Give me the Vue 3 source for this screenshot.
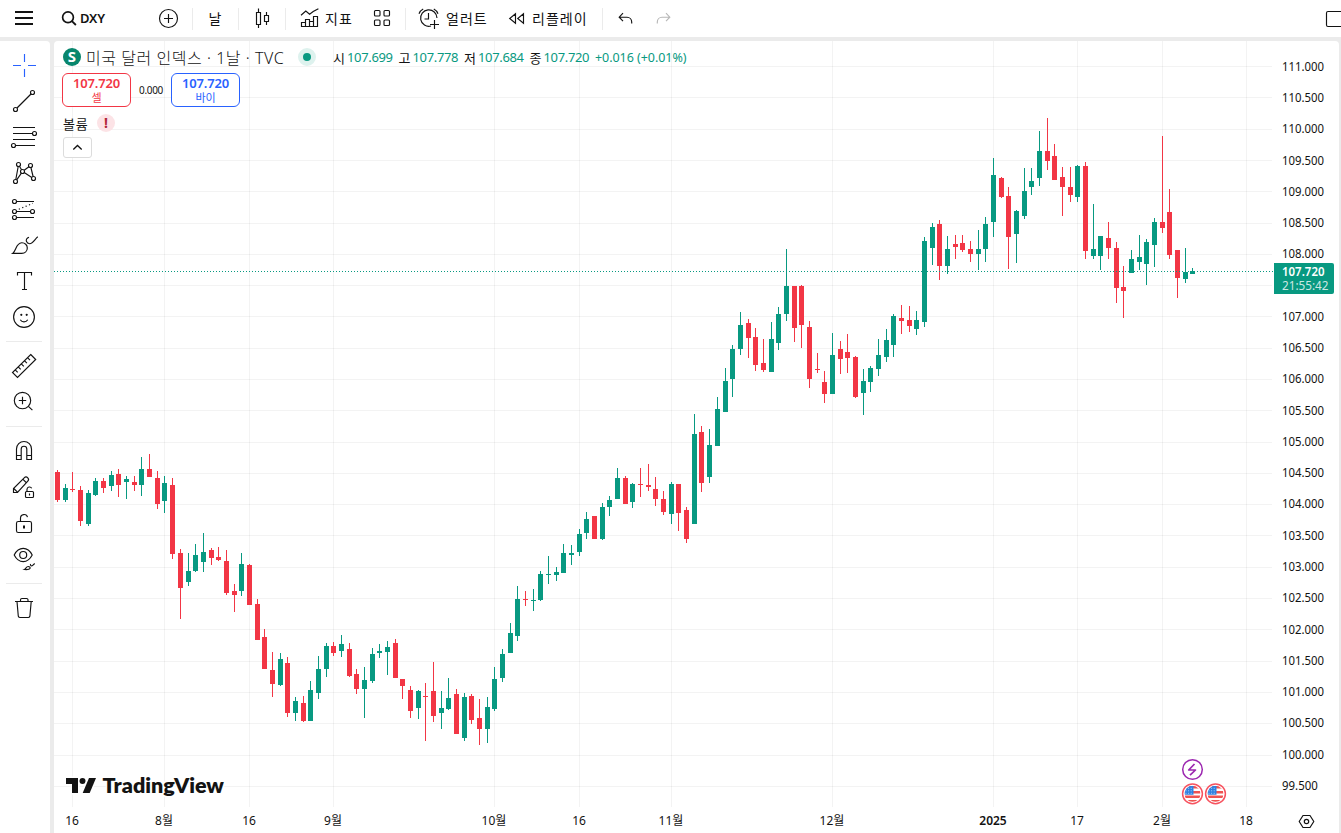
<script setup>
const UP = '#089981'
const DOWN = '#f23645'

// Each row: x, wick top, wick bottom, body top, body bottom, rising (1) or falling (0)
const candles = [
  [57,470,502,472,500,0],[65,484,502,488,500,1],[72,472,492,489,490,0],[80,486,526,490,521,0],
  [88,490,526,493,524,1],[95,478,496,481,495,1],[103,478,493,481,488,0],[111,471,491,475,486,1],
  [118,469,497,474,485,0],[126,476,499,479,482,1],[134,476,491,482,485,0],[141,457,496,469,485,1],
  [149,454,477,469,477,0],[157,471,509,478,504,0],[164,476,513,483,501,1],[172,478,559,485,554,0],
  [180,549,619,553,588,0],[188,553,586,571,582,1],[195,544,572,555,571,1],[203,533,572,552,562,1],
  [211,548,565,550,558,0],[218,547,561,557,560,0],[226,550,595,561,593,0],[234,584,612,591,595,0],
  [241,553,596,564,591,1],[249,564,605,565,605,0],[257,599,640,604,640,0],[264,629,669,637,669,0],
  [272,652,697,670,684,0],[280,653,686,659,685,1],[287,657,717,663,713,0],[295,697,721,701,713,1],
  [303,696,722,703,721,0],[310,681,721,690,721,1],[318,656,699,669,693,1],[326,643,677,646,669,1],
  [333,642,656,646,653,0],[341,635,657,644,651,1],[349,643,677,649,676,0],[356,669,694,674,689,0],
  [364,667,718,680,689,1],[372,648,683,654,681,1],[379,644,658,651,653,1],[387,641,675,647,652,1],
  [395,639,678,643,678,0],[402,679,699,679,686,0],[410,686,718,690,711,0],[418,690,719,691,708,1],
  [425,683,741,696,697,0],[433,662,722,691,716,0],[441,691,729,708,713,1],[448,678,710,698,709,1],
  [456,689,734,694,734,0],[464,693,741,697,738,1],[471,694,724,696,720,0],[479,699,745,718,729,0],
  [487,697,743,707,729,1],[494,667,711,679,709,1],[502,649,682,654,678,1],[510,623,653,633,653,1],
  [517,586,641,599,636,1],[525,591,606,599,600,0],[533,589,611,600,601,1],[540,571,601,574,600,1],
  [548,556,584,574,575,1],[556,567,581,572,575,1],[563,544,573,553,573,1],[571,545,565,553,555,1],
  [579,529,556,534,552,1],[586,512,539,519,533,1],[594,516,539,516,539,0],[602,503,540,507,539,1],
  [609,496,516,500,507,1],[617,468,499,478,499,1],[625,476,504,478,504,0],[632,483,508,484,502,1],
  [640,468,497,484,485,0],[648,464,491,485,487,0],[655,477,506,489,499,0],[663,491,515,499,512,0],
  [671,482,524,484,514,1],[678,484,531,484,513,0],[686,507,543,510,539,0],[694,414,524,434,524,1],
  [701,426,492,432,483,0],[709,429,483,445,477,1],[717,397,446,409,446,1],[725,368,412,381,412,1],
  [732,345,397,349,379,1],[740,312,355,325,349,1],[748,319,358,323,338,0],[755,328,371,337,365,0],
  [763,339,372,363,370,0],[771,322,372,339,372,1],[778,307,350,314,343,1],[786,249,321,286,314,1],
  [794,286,342,286,328,0],[801,285,348,286,325,0],[809,321,388,327,379,0],[817,353,373,369,370,0],
  [824,371,403,382,394,0],[832,333,394,355,394,1],[840,341,374,349,359,0],[847,334,373,352,358,0],
  [855,356,398,357,397,0],[863,369,415,381,393,1],[870,366,392,368,382,1],[878,339,376,355,369,1],
  [886,329,362,340,357,1],[893,314,357,316,345,1],[901,305,334,318,321,0],[909,306,332,320,326,0],
  [916,311,335,320,329,1],[924,237,327,241,322,1],[932,223,265,227,248,1],[939,220,280,224,266,0],
  [947,236,274,249,266,1],[955,235,259,244,247,0],[962,235,252,243,250,0],[970,241,262,249,254,0],
  [978,230,270,249,254,1],[985,217,262,224,249,1],[993,158,237,175,222,1],[1001,177,198,178,197,0],
  [1008,187,269,196,237,0],[1016,210,263,211,234,1],[1024,168,219,191,216,1],[1031,168,195,181,187,1],
  [1039,131,186,151,178,1],[1047,118,170,151,161,0],[1054,144,180,156,180,0],[1062,167,216,177,187,0],
  [1070,167,202,187,195,0],[1077,165,202,166,197,1],[1085,162,259,166,251,0],[1093,204,259,249,256,1],
  [1100,236,270,236,256,1],[1108,222,259,238,248,0],[1116,242,303,248,288,0],[1123,266,318,287,291,0],
  [1131,250,273,259,273,1],[1139,235,270,257,262,1],[1146,239,285,242,264,1],[1154,218,267,222,245,1],
  [1162,136,233,222,228,0],[1169,189,259,212,255,0],[1177,250,298,250,278,0],[1185,248,283,272,279,1],
  [1192,268,274,271,274,1],
]

const rows = [66,97,129,160,191,223,254,285,316,348,379,410,442,473,504,535,567,598,629,661,692,723,755,786]
const prices = rows
  .map((y, i) => ({ y: Math.floor(66.2 + i * 31.27), text: (111 - i * 0.5).toFixed(3) }))
  .filter((p) => p.text !== '107.500')

const dates = [
  [72, '16'], [164, '8월'], [249, '16'], [333, '9월'], [494, '10월'], [579, '16'],
  [671, '11월'], [832, '12월'], [993, '2025'], [1077, '17'], [1162, '2월'], [1246, '18'],
]

const ohlc = [['시', '107.699'], ['고', '107.778'], ['저', '107.684'], ['종', '107.720']]
</script>

<template>
  <div class="app">
    <header class="topbar">
      <svg class="ic" width="48" height="37" viewBox="0 0 48 37"><path d="M15 12h18M15 18h18M15 24h18" stroke-width="2" /></svg>
      <div class="cell search">
        <svg class="ic" width="32" height="37" viewBox="48 0 32 37"><circle cx="68" cy="17.3" r="5.4" stroke-width="1.7" /><path d="M71.9 21.2l4 3.8" stroke-width="1.8" /></svg>
        <b>DXY</b>
      </div>
      <svg class="ic" width="48" height="37" viewBox="144 0 48 37"><circle cx="168.5" cy="18.5" r="9" /><path d="M164 18.5h9M168.5 14v9" /></svg>
      <i class="sep"></i>
      <div class="cell day"><span>날</span></div>
      <i class="sep"></i>
      <svg class="ic" width="46" height="37" viewBox="239 0 46 37"><path d="M256.5 12.5h4v12h-4zM258.5 8.5v4M258.5 24.5v3.5M264.5 15.5h4v6h-4zM266.5 12v3.5M266.5 21.5v3.5" /></svg>
      <i class="sep"></i>
      <div class="cell indicators">
        <svg class="ic" width="39" height="37" viewBox="286 0 39 37"><path d="M301.5 26.5v-4h4v4zM305.5 26.5v-7h4v7zM309.5 26.5v-5h4v5zM313.500 26.5v-10h4v10z" /><path d="M301 15.200l4.800-4.200 3.800 3.200 3.600-2.700 5.200-2.700" /></svg>
        <span>지표</span>
      </div>
      <svg class="ic" width="41" height="37" viewBox="364 0 41 37"><rect x="374.5" y="10.500" width="5.500" height="5.500" rx="1" /><rect x="384" y="10.500" width="5.500" height="5.500" rx="1" /><rect x="374.500" y="20" width="5.500" height="5.500" rx="1" /><rect x="384" y="20" width="5.500" height="5.500" rx="1" /></svg>
      <i class="sep"></i>
      <div class="cell alerts">
        <svg class="ic" width="40" height="37" viewBox="406 0 40 37"><path d="M431 26a8.200 8.200 0 1 1 6-8M428.500 13v6h-4M419 13.800a9 9 0 0 1 4.200-4.700M438 13.800a9 9 0 0 0-4.200-4.700M434.500 20v9M430 24.500h9" /></svg>
        <span>얼러트</span>
      </div>
      <div class="cell replay">
        <svg class="ic" width="33" height="37" viewBox="499 0 33 37"><path d="M515.500 13.800v9.400l-5.800-4.700zM523.500 13.800v9.400l-5.800-4.700z" /></svg>
        <span>리플레이</span>
      </div>
      <i class="sep"></i>
      <svg class="ic" width="42" height="37" viewBox="603 0 42 37"><path d="M623 13.200l-3.800 4 3.800 4M619.500 17.200h7.500a4.800 4.800 0 0 1 4.700 4.800v1.500" /></svg>
      <svg class="ic off" width="45" height="37" viewBox="645 0 45 37"><path d="M666 13.200l3.800 4-3.800 4M669.500 17.200h-7.500a4.800 4.800 0 0 0-4.700 4.800v1.500" /></svg>
      <svg class="ic window" width="20" height="37" viewBox="1321 0 20 37"><rect x="1326.500" y="11.500" width="22" height="15" rx="1.500" /></svg>
    </header>

    <div class="body">
      <nav class="tools">
        <svg class="ic cross" viewBox="0 0 36 36"><path d="M18.500 7v8M18.500 22v8M7 18.500h8M22 18.500h8" /></svg>
        <svg class="ic" viewBox="0 0 36 36"><circle cx="9.500" cy="26.500" r="2" /><circle cx="26.500" cy="9.500" r="2" /><path d="M11 25L25 11" /></svg>
        <svg class="ic" viewBox="0 0 36 36"><path d="M7 8.500h22M7 14.500h19.500M7 20.500h22M9.500 26.500H29" /><circle cx="28.500" cy="14.500" r="2" /><circle cx="7.500" cy="26.500" r="2" /></svg>
        <svg class="ic" viewBox="0 0 36 36"><path d="M9.800 24.500l2.400-13M13.400 11.300l2.200 3.500M18.200 15.300l4.700-3.500M24.900 12.500l2.200 9M10.700 24.800l4.700-6.600M18.200 17.600l7.600 4.800" /><circle cx="12.500" cy="9.500" r="2" /><circle cx="24.500" cy="10.500" r="2" /><circle cx="16.500" cy="16.500" r="2" /><circle cx="9.500" cy="26.500" r="2" /><circle cx="27.500" cy="23.500" r="2" /></svg>
        <svg class="ic" viewBox="0 0 36 36"><circle cx="8.500" cy="10.500" r="2" /><circle cx="8.500" cy="20.500" r="2" /><circle cx="8.500" cy="26.500" r="2" /><circle cx="26.500" cy="20.500" r="2" /><path d="M10.500 10.500H28M10.500 20.500h14M10.500 26.500H28" /><path d="M12.800 18.300l14-6" stroke-dasharray="1.200 2.500" /></svg>
        <svg class="ic" viewBox="0 0 36 36"><path d="M6.700 26.400c3.600-2.400 3-10.300 9-10.600 3.300-.1 5.600 2.300 5.600 5.200 0 3.300-2.500 5.400-5.500 5.400zM23 10.200c-2.300.8-3.200 2.600-2.500 4.200M31.800 9.800c-2.800 2-4.800 7-8.200 6.900-1.500-.1-2.700-1-3.100-2.300" /></svg>
        <svg class="ic" viewBox="0 0 36 36"><path d="M11.500 12.500v-3h14v3M18.500 9.500v17M16 26.500h5" /></svg>
        <svg class="ic" viewBox="0 0 36 36"><circle cx="18" cy="18" r="10.400" /><path d="M14.300 20.700c1.700 2.900 5.700 2.900 7.400 0" /><circle class="dot" cx="15.300" cy="15.800" r="1.100" /><circle class="dot" cx="20.700" cy="15.800" r="1.100" /></svg>
        <hr />
        <svg class="ic" viewBox="0 0 36 36"><path d="M24.700 6.500l5 5-18.200 18-5-5zM21.500 9.700l2.500 2.500M18.400 12.700l2.500 2.500M15.300 15.800l2.500 2.500M12.200 18.900l2.500 2.500M9.200 21.900l2.500 2.500" /></svg>
        <svg class="ic" viewBox="0 0 36 36"><circle cx="16.500" cy="16.500" r="8.200" /><path d="M22.400 22.400l4 3.800M12.800 16.500h7.400M16.500 12.800v7.400" /></svg>
        <hr />
        <svg class="ic" viewBox="0 0 36 36"><path d="M10.500 26.500V16a7.500 7.500 0 0 1 15 0v10.500h-4.700V16a2.800 2.800 0 0 0-5.600 0v10.500zM10.500 22.500h4.700M20.800 22.500h4.700" /></svg>
        <svg class="ic" viewBox="0 0 36 36"><path d="M7.500 23.500v-4L18.200 8.800c1.200-1.200 2.800-.8 3.600 0s1 2.200 0 3.300L11.500 23.500zM7.800 19.500l3.700 3.700M16.800 10.200l3.800 3.800" /><rect x="19.500" y="22.500" width="8" height="6" rx="1" /><path d="M21 22.500v-2.200a2.500 2.500 0 0 1 4.700-1M23.500 24.500v2" /></svg>
        <svg class="ic" viewBox="0 0 36 36"><rect x="10.500" y="16.500" width="15" height="11" rx="1.800" /><path d="M14.500 16.500v-3.300c0-4.300 6-5 7-1" /><path d="M18 20.500v3" stroke-width="2" /></svg>
        <svg class="ic" viewBox="0 0 36 36"><path d="M8.200 14c4.500-8.800 13.500-8.800 18 0-4.500 8.800-13.500 8.800-18 0z" /><circle cx="17.200" cy="14" r="3.500" /><path d="M18.500 28.500c1.500-.7 1.600-3 3.700-3 1.500 0 2.300 1 1.800 2-.6 1.200-3 1.200-5.500 1zM24.500 23c-.5 2 1.200 2.300 2.200 1.300l2-1.800" /></svg>
        <hr />
        <svg class="ic" viewBox="0 0 36 36"><path d="M9 11.500h18M14.500 11.500v-1.600a1.400 1.400 0 0 1 1.400-1.400h4.700a1.400 1.400 0 0 1 1.400 1.400v1.600M11 11.500l1.300 14.700a1.500 1.500 0 0 0 1.500 1.300h8.600a1.500 1.500 0 0 0 1.500-1.300L25.200 11.500" /></svg>
      </nav>

      <main class="chart">
        <svg class="plot" width="1285" height="792" viewBox="54 41 1285 792">
          <g fill="#2e2e2e" fill-opacity="0.06">
            <rect v-for="y in rows" :key="'r' + y" x="54" :y="y" width="1218" height="1" />
            <rect v-for="d in dates" :key="'c' + d[0]" :x="d[0]" y="41" width="1" height="766" />
          </g>
          <g v-for="c in candles" :key="c[0]" :fill="c[5] ? UP : DOWN">
            <rect :x="c[0]" :y="c[1]" width="1" :height="c[2] - c[1]" />
            <rect :x="c[0] - 2" :y="c[3]" width="5" :height="c[4] - c[3]" />
          </g>
          <path d="M54 271.500H1274" :stroke="UP" stroke-dasharray="1 2" />

          <g class="axis">
            <text v-for="p in prices" :key="p.text" x="1282" :y="p.y + 5" :textLength="p.text.length * 6.2 - 1.400" lengthAdjust="spacingAndGlyphs">{{ p.text }}</text>
            <text v-for="d in dates" :key="'t' + d[0]" :x="d[0]" y="825" text-anchor="middle" :class="{ strong: d[1] === '2025' }">{{ d[1] }}</text>
          </g>

          <path d="M1274 263h58a2 2 0 0 1 2 2v27a2 2 0 0 1-2 2h-58z" :fill="UP" />
          <g class="axis tag">
            <text class="strong" x="1282" y="276" textLength="42.500" lengthAdjust="spacingAndGlyphs">107.720</text>
            <text class="timer" x="1282" y="290" textLength="46.500" lengthAdjust="spacingAndGlyphs">21:55:42</text>
          </g>

          <g class="brand">
            <path d="M66 778h12v15h-6v-9h-6z" /><circle cx="82.500" cy="781" r="3" /><path d="M89 778h7l-6.300 15h-7z" />
            <text x="102.500" y="793" textLength="121.500" lengthAdjust="spacingAndGlyphs">TradingView</text>
          </g>

          <circle cx="1192.500" cy="769.500" r="9.800" fill="#fff" stroke="#9c27b0" stroke-width="1.500" />
          <path d="M1194.500 764l-5.800 6h6.800l-5.500 5.200" fill="none" stroke="#9c27b0" stroke-width="1.700" stroke-linejoin="round" />
          <g v-for="x in [1192.500, 1215.500]" :key="x" :transform="`translate(${x} 793.800)`">
            <clipPath :id="'flag' + Math.floor(x)"><circle r="8" /></clipPath>
            <circle r="9.900" fill="#fff" stroke="#f7525f" stroke-width="1.500" />
            <g :clip-path="`url(#flag${Math.floor(x)})`">
              <path d="M-8-6.600H8M-8-1.600H8M-8 3H8M-8 7.300H8" stroke="#ef5350" stroke-width="2.400" />
              <path d="M-8-8h9v9h-9z" fill="#2f80e0" />
              <path d="M-7-5.500h8M-7-3h8M-7-.5h8" stroke="#a9cff8" stroke-dasharray="1 1.600" />
            </g>
          </g>
          <g fill="none" stroke="#131313" stroke-width="1.200">
            <path d="M1303 815.500h7l3.800 6-3.800 6h-7l-3.800-6z" stroke-linejoin="round" /><circle cx="1306.500" cy="821.500" r="2.200" />
          </g>
        </svg>

        <section class="legend">
          <div class="line">
            <svg class="coin" width="18" height="18" viewBox="0 0 18 18"><circle cx="9" cy="9" r="9" /><text x="9" y="14.200" text-anchor="middle">S</text></svg>
            <span class="title">미국 달러 인덱스 · 1날 · TVC</span>
            <span class="status"></span>
            <span v-for="o in ohlc" :key="o[0]" class="ohlc"><span>{{ o[0] }}</span><em>{{ o[1] }}</em></span>
            <em class="change">+0.016 (+0.01%)</em>
          </div>
          <div class="trade">
            <button class="sell"><b>107.720</b><span>셀</span></button>
            <span class="spread">0.000</span>
            <button class="buy"><b>107.720</b><span>바이</span></button>
          </div>
          <div class="volume"><span>볼륨</span><b class="warn">!</b></div>
          <button class="fold"><svg width="11" height="7" viewBox="0 0 11 7"><path d="M1.300 5.500l4.200-4 4.200 4" fill="none" stroke="#131313" stroke-width="1.300" /></svg></button>
        </section>
      </main>
    </div>
  </div>
</template>

<style>
body { margin: 0; background: #ebebeb; overflow: hidden; }
</style>

<style scoped>
.app {
  width: 1341px;
  height: 833px;
  display: flex;
  flex-direction: column;
  gap: 4px;
  background: #ebebeb;
  color: #131313;
  font-family: "Noto Sans", "Noto Sans CJK KR", sans-serif;
  overflow: hidden;
}
.topbar { display: flex; align-items: center; height: 37px; flex: none; background: #fff; font-size: 14px; }
.ic { flex: none; fill: none; stroke: #131313; stroke-width: 1.150; }
.off { stroke: #b8b8b8; }
.window { margin-left: auto; }
.cell { display: flex; align-items: center; flex: none; height: 37px; box-sizing: border-box; white-space: nowrap; letter-spacing: 1px; }
.cell span, .cell b { padding-bottom: 2px; }
.search { width: 96px; letter-spacing: -0.200px; font-size: 13px; }
.search b { font-weight: 600; }
.day { width: 45px; justify-content: center; }
.indicators { width: 78px; }
.alerts { width: 93px; }
.replay { width: 103px; }
.sep { width: 1px; height: 22px; background: #ebebeb; flex: none; }

.body { display: flex; flex: 1; gap: 4px; min-height: 0; }
.tools { width: 50px; box-sizing: border-box; padding: 6px 8px 0 6px; background: #fff; border-top-right-radius: 4px; display: flex; flex-direction: column; }
.tools .ic { width: 36px; height: 36px; }
.tools .cross { stroke: #2962ff; }
.tools .dot { fill: #131313; stroke: none; }
.tools hr { width: 36px; height: 1px; margin: 6px 0; border: 0; background: #ebebeb; flex: none; }

.chart { position: relative; width: 1285px; background: #fff; border-radius: 4px 4px 0 0; overflow: hidden; }
.plot { display: block; }
.axis text { font-size: 12px; fill: #131313; }
.axis .strong { font-weight: 600; }
.axis.tag text { fill: #fff; }
.axis.tag .timer { fill-opacity: 0.800; }
.brand { fill: #131313; stroke: #fff; stroke-width: 3px; paint-order: stroke; }
.brand text { font: 800 20.500px Lato, sans-serif; }

.legend { position: absolute; left: 8px; top: 7px; }
.line { display: flex; align-items: center; height: 18px; padding-left: 1px; font-size: 13px; white-space: nowrap; }
.coin { overflow: visible; }
.coin circle { fill: #08866d; }
.coin text { fill: #fff; font: 700 15px "Noto Sans", sans-serif; }
.title { width: 199px; margin-left: 5px; font-size: 16px; font-weight: 300; letter-spacing: 0.550px; }
.status { width: 8px; height: 8px; margin: 0 17px 0 13px; border: 5px solid #def2ee; border-radius: 50%; background: #089981; }
.ohlc { display: flex; width: 65.500px; }
.ohlc span { width: 14px; }
em { font-style: normal; color: #089981; letter-spacing: -0.350px; }
.change { padding-top: 1px; letter-spacing: -0.050px; font-size: 12.500px; }

.trade { display: flex; align-items: center; margin-top: 7px; }
button { font-family: inherit; background: #fff; padding: 0; box-sizing: border-box; }
.sell, .buy { width: 69px; height: 34px; border: 1px solid; border-radius: 6px; display: flex; flex-direction: column; align-items: center; }
.sell { color: #f23645; }
.buy { color: #2962ff; }
.trade b { font-size: 13px; line-height: 15px; margin-top: 2px; font-weight: 600; letter-spacing: -0.200px; }
.trade button span { font-size: 11px; line-height: 13px; }
.spread { width: 40px; text-align: center; font-size: 10px; letter-spacing: -0.300px; }
.volume { display: flex; align-items: center; height: 18px; margin-top: 7px; padding-left: 1px; font-size: 13px; }
.volume span { width: 34px; letter-spacing: 0.800px; }
.warn { width: 18px; height: 18px; border-radius: 50%; background: #fce3e6; color: #b2283a; text-align: center; font-size: 14px; line-height: 18px; }
.fold { display: flex; align-items: center; justify-content: center; width: 29px; height: 21px; margin: 5px 0 0 1px; border: 1px solid #dcdcdc; border-radius: 3px; }
</style>
